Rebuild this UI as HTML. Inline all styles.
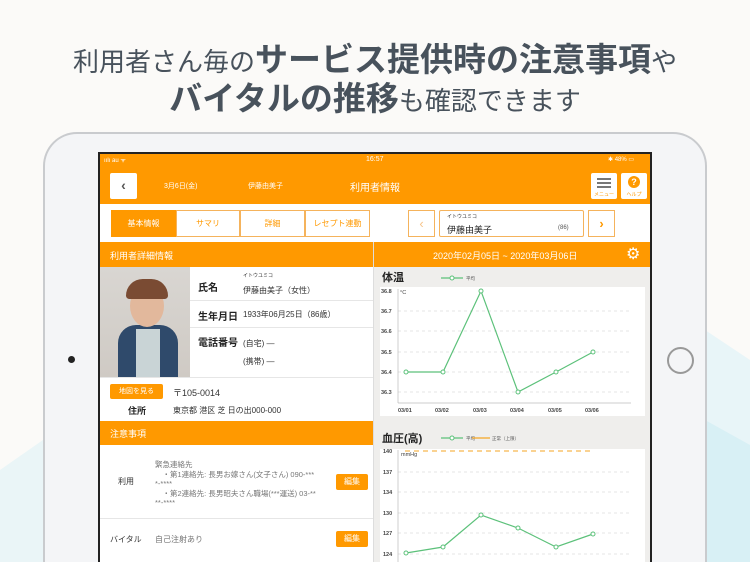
<!DOCTYPE html><html><head><meta charset="utf-8"><style>
*{margin:0;padding:0;box-sizing:border-box}
html,body{width:750px;height:562px;overflow:hidden}
body{background:#fbfaf8;font-family:"Liberation Sans","Noto Sans CJK JP",sans-serif;position:relative;color:#333}
.abs{position:absolute}
.h{position:absolute;left:0;width:750px;text-align:center;color:#48525c;white-space:nowrap;font-family:"Noto Sans CJK JP",sans-serif}
.r{font-size:26px;font-weight:400}.b{font-size:33px;font-weight:700}
.or{background:#ff9900}
.w{color:#fff}
.seg{position:absolute;height:27px;border:1px solid #f5b35c;font-size:8px;color:#ff9900;text-align:center;line-height:25px;background:#fff}
.lbl{position:absolute;font-size:10px;font-weight:700;color:#222}
.t9{font-size:9px;color:#333;position:absolute}
.btn{position:absolute;background:#ff9900;color:#fff;font-size:8px;text-align:center;border-radius:2px}
.line{position:absolute;height:1px;background:#e6e6e6}
</style></head><body>
<svg class="abs" style="left:0;top:0" width="750" height="562"><polygon points="705,330 750,360 750,562 705,562" fill="#e8f5f8"/><polygon points="705,420 750,445 750,562 705,562" fill="#d8f0f5"/><polygon points="0,470 43,440 43,562 0,562" fill="#eaf5f7"/></svg>
<div class="h" style="top:33px"><span class="r">利用者さん毎の</span><span class="b">サービス提供時の注意事項</span><span class="r">や</span></div>
<div class="h" style="top:72px"><span class="b">バイタルの推移</span><span class="r">も確認できます</span></div>
<div class="abs" style="left:43px;top:132px;width:664px;height:430px;border-radius:34px 34px 0 0;background:#f4f5f7;border:2px solid #c9cbce;border-bottom:none"></div>
<div class="abs" style="left:68px;top:356px;width:7px;height:7px;border-radius:50%;background:#222"></div>
<div class="abs" style="left:667px;top:347px;width:27px;height:27px;border-radius:50%;border:2px solid #999"></div>
<div class="abs" style="left:98px;top:152px;width:554px;height:410px;background:#222"></div>
<div class="abs" style="left:100px;top:154px;width:550px;height:408px;background:#fff;overflow:hidden">
 <div class="abs or" style="left:0;top:0;width:550px;height:88px"></div>
 <div class="abs w" style="left:4px;top:2px;font-size:6px">ıılı au ᯤ</div>
 <div class="abs w" style="left:266px;top:2px;font-size:7px">16:57</div>
 <div class="abs w" style="left:508px;top:2px;font-size:6px">✱ 48% ▭</div>
 <div class="abs" style="left:10px;top:19px;width:27px;height:26px;background:#fff;border-radius:2px;color:#555;font-size:14px;font-weight:700;text-align:center;line-height:25px">‹</div>
 <div class="abs w" style="left:64px;top:27px;font-size:7px">3月6日(金)</div>
 <div class="abs w" style="left:148px;top:27px;font-size:7px">伊藤由美子</div>
 <div class="abs w" style="left:250px;top:25px;font-size:10px">利用者情報</div>
 <div class="abs" style="left:491px;top:19px;width:26px;height:26px;background:#fff;border-radius:2px"><div class="abs" style="left:6px;top:5px;width:14px;height:10px;border-top:2px solid #777;border-bottom:2px solid #777"></div><div class="abs" style="left:6px;top:9px;width:14px;height:2px;background:#777"></div><div class="abs" style="left:0;top:18px;width:26px;font-size:5px;text-align:center;color:#ff9900">メニュー</div></div>
 <div class="abs" style="left:521px;top:19px;width:26px;height:26px;background:#fff;border-radius:2px"><div class="abs" style="left:7px;top:3px;width:12px;height:12px;border-radius:50%;background:#ff9900;color:#fff;font-size:9px;font-weight:700;text-align:center;line-height:12px">?</div><div class="abs" style="left:0;top:18px;width:26px;font-size:5px;text-align:center;color:#ff9900">ヘルプ</div></div>
 <div class="abs" style="left:0;top:50px;width:550px;height:38px;background:#fff"></div>
 <div class="seg" style="left:11px;width:65px;top:56px;background:#ff9900;color:#fff;border-color:#ff9900">基本情報</div>
 <div class="seg" style="left:76px;width:64px;top:56px">サマリ</div>
 <div class="seg" style="left:140px;width:65px;top:56px">詳細</div>
 <div class="seg" style="left:205px;width:65px;top:56px">レセプト連動</div>
 <div class="seg" style="left:308px;width:27px;top:56px;font-size:13px;color:#f7c489">‹</div>
 <div class="abs" style="left:339px;top:56px;width:145px;height:27px;border:1px solid #f5b35c;border-radius:2px"><div class="abs" style="left:7px;top:2px;font-size:5px">イトウユミコ</div><div class="abs" style="left:7px;top:12px;font-size:9px;color:#222">伊藤由美子</div><div class="abs" style="left:118px;top:14px;font-size:6px;color:#555">(86)</div></div>
 <div class="seg" style="left:488px;width:27px;top:56px;font-size:13px;font-weight:700">›</div>
 <div class="abs or" style="left:0;top:88px;width:550px;height:25px"></div>
 <div class="abs w" style="left:10px;top:95px;font-size:9px">利用者詳細情報</div>
 <div class="abs" style="left:273px;top:88px;width:1px;height:320px;background:#ddd"></div>
 <div class="abs w" style="left:333px;top:95px;font-size:9px">2020年02月05日 ~ 2020年03月06日</div>
 <div class="abs w" style="left:526px;top:90px;font-size:16px">⚙</div>
 <div class="abs" style="left:0;top:113px;width:90px;height:110px;background:linear-gradient(#d9d6d2,#cfcac4);overflow:hidden">
  <div class="abs" style="left:18px;top:58px;width:60px;height:52px;background:#2f4a6b;border-radius:18px 18px 0 0"></div>
  <div class="abs" style="left:36px;top:62px;width:24px;height:48px;background:#c9d4d6"></div>
  <div class="abs" style="left:30px;top:18px;width:34px;height:42px;background:#e2b89c;border-radius:50%"></div>
  <div class="abs" style="left:26px;top:12px;width:42px;height:20px;background:#7a4b33;border-radius:20px 20px 4px 4px"></div>
 </div>
 <div class="lbl" style="left:98px;top:125px">氏名</div><div class="abs" style="left:143px;top:118px;font-size:5px">イトウユミコ</div><div class="t9" style="left:143px;top:131px;font-size:8px">伊藤由美子（女性）</div>
 <div class="line" style="left:90px;top:146px;width:183px"></div>
 <div class="lbl" style="left:98px;top:154px">生年月日</div><div class="t9" style="left:143px;top:155px;font-size:8px">1933年06月25日（86歳）</div>
 <div class="line" style="left:90px;top:173px;width:183px"></div>
 <div class="lbl" style="left:98px;top:180px">電話番号</div><div class="t9" style="left:143px;top:184px;font-size:8px">(自宅) —</div><div class="t9" style="left:143px;top:202px;font-size:8px">(携帯) —</div>
 <div class="line" style="left:0;top:223px;width:273px"></div>
 <div class="btn" style="left:10px;top:230px;width:53px;height:15px;line-height:15px;font-size:7px">地図を見る</div>
 <div class="t9" style="left:73px;top:232px;font-size:9px">〒105-0014</div>
 <div class="lbl" style="left:28px;top:250px;font-size:9px">住所</div><div class="t9" style="left:73px;top:251px;font-size:8px">東京都 港区 芝 日の出000-000</div>
 <div class="abs or" style="left:0;top:267px;width:273px;height:24px"></div>
 <div class="abs w" style="left:10px;top:273px;font-size:9px">注意事項</div>
 <div class="t9" style="left:18px;top:322px;font-size:8px">利用</div>
 <div class="abs" style="left:55px;top:306px;font-size:7.5px;color:#777;line-height:9.5px">緊急連絡先<br>　・第1連絡先: 長男お嫁さん(文子さん) 090-***<br>*-****<br>　・第2連絡先: 長男昭夫さん職場(***運送) 03-**<br>**-****</div>
 <div class="btn" style="left:236px;top:320px;width:32px;height:16px;line-height:16px">編集</div>
 <div class="line" style="left:0;top:364px;width:273px"></div>
 <div class="t9" style="left:10px;top:380px;font-size:8px">バイタル</div><div class="t9" style="left:55px;top:380px;font-size:8px;color:#777">自己注射あり</div>
 <div class="btn" style="left:236px;top:377px;width:32px;height:16px;line-height:16px">編集</div>
 <div class="abs" style="left:274px;top:113px;width:276px;height:295px;background:#efeeec"></div>
</div>
<svg class="abs" style="left:0;top:0" width="750" height="562" font-family="Liberation Sans,Noto Sans CJK JP,sans-serif">
 <text x="382" y="281" font-size="11" font-weight="bold" fill="#222">体温</text>
 <line x1="441" y1="278" x2="463" y2="278" stroke="#5cc17a" stroke-width="1.2"/><circle cx="452" cy="278" r="2" fill="#fff" stroke="#5cc17a"/><text x="466" y="280" font-size="4.5" fill="#555">平均</text>
 <rect x="380" y="287" width="265" height="129" fill="#fff"/>
 <g stroke="#ccc" stroke-dasharray="3,3" stroke-width="0.6"><line x1="398" y1="311" x2="632" y2="311"/><line x1="398" y1="331" x2="632" y2="331"/><line x1="398" y1="352" x2="632" y2="352"/><line x1="398" y1="372" x2="632" y2="372"/><line x1="398" y1="392" x2="632" y2="392"/></g>
 <line x1="398" y1="289" x2="398" y2="403" stroke="#bbb" stroke-width="0.7"/><line x1="398" y1="403" x2="631" y2="403" stroke="#bbb" stroke-width="0.7"/>
 <g font-size="5.5" fill="#444" font-weight="bold"><text x="381" y="293">36.8</text><text x="381" y="313">36.7</text><text x="381" y="333">36.6</text><text x="381" y="354">36.5</text><text x="381" y="374">36.4</text><text x="381" y="394">36.3</text><text x="400" y="294" font-weight="normal">°C</text>
 <text x="398" y="412">03/01</text><text x="435" y="412">03/02</text><text x="473" y="412">03/03</text><text x="510" y="412">03/04</text><text x="548" y="412">03/05</text><text x="585" y="412">03/06</text></g>
 <polyline points="406,372 443,372 481,291 518,392 556,372 593,352" fill="none" stroke="#5cc17a" stroke-width="1.2"/>
 <g fill="#fff" stroke="#5cc17a"><circle cx="406" cy="372" r="2"/><circle cx="443" cy="372" r="2"/><circle cx="481" cy="291" r="2"/><circle cx="518" cy="392" r="2"/><circle cx="556" cy="372" r="2"/><circle cx="593" cy="352" r="2"/></g>
 <text x="382" y="442" font-size="11" font-weight="bold" fill="#222">血圧(高)</text>
 <line x1="441" y1="438" x2="463" y2="438" stroke="#5cc17a" stroke-width="1.2"/><circle cx="452" cy="438" r="2" fill="#fff" stroke="#5cc17a"/><text x="466" y="440" font-size="4.5" fill="#555">平均</text>
 <line x1="472" y1="438" x2="490" y2="438" stroke="#f5a623" stroke-width="1.2"/><text x="492" y="440" font-size="4.5" fill="#555">正常（上限）</text>
 <rect x="380" y="449" width="265" height="113" fill="#fff"/>
 <g stroke="#ccc" stroke-dasharray="3,3" stroke-width="0.6"><line x1="398" y1="472" x2="632" y2="472"/><line x1="398" y1="492" x2="632" y2="492"/><line x1="398" y1="513" x2="632" y2="513"/><line x1="398" y1="533" x2="632" y2="533"/><line x1="398" y1="554" x2="632" y2="554"/></g>
 <line x1="405" y1="451" x2="594" y2="451" stroke="#f5a623" stroke-dasharray="5,4" stroke-width="1"/>
 <line x1="398" y1="450" x2="398" y2="562" stroke="#bbb" stroke-width="0.7"/>
 <g font-size="5.5" fill="#444" font-weight="bold"><text x="383" y="453">140</text><text x="383" y="474">137</text><text x="383" y="494">134</text><text x="383" y="515">130</text><text x="383" y="535">127</text><text x="383" y="556">124</text><text x="401" y="456" font-weight="normal">mmHg</text></g>
 <polyline points="406,553 443,547 481,515 518,528 556,547 593,534" fill="none" stroke="#5cc17a" stroke-width="1.2"/>
 <g fill="#fff" stroke="#5cc17a"><circle cx="406" cy="553" r="2"/><circle cx="443" cy="547" r="2"/><circle cx="481" cy="515" r="2"/><circle cx="518" cy="528" r="2"/><circle cx="556" cy="547" r="2"/><circle cx="593" cy="534" r="2"/></g>
</svg>
</body></html>
